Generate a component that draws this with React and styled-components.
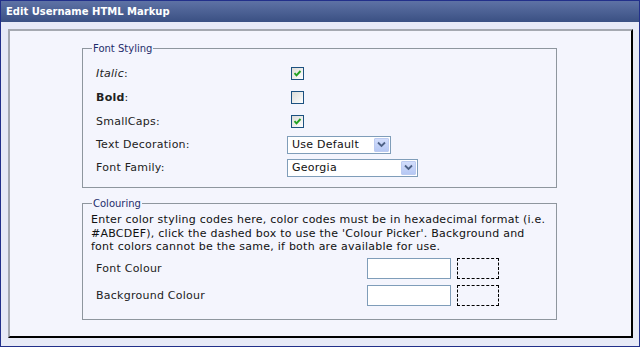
import React from 'react';
import styled, { createGlobalStyle } from 'styled-components';

const GlobalStyle = createGlobalStyle`
  body {
    margin: 0;
    font-family: "DejaVu Sans", Verdana, sans-serif;
  }
`;

const Window = styled.div`
  box-sizing: border-box;
  width: 640px;
  height: 347px;
  border: 1px solid #22308a;
  background: #e7eaf7;
  display: flex;
  flex-direction: column;
`;

const TitleBar = styled.div`
  height: 21px;
  line-height: 21px;
  padding-left: 5px;
  background: linear-gradient(#5e72a5, #3a5083);
  color: #fff;
  font-weight: bold;
  font-size: 10px;
`;

const Body = styled.div`
  flex: 1;
  padding: 7px 6px 8px 7px;
  display: flex;
`;

const Panel = styled.div`
  flex: 1;
  box-sizing: border-box;
  border-top: 2px solid #a5a9b1;
  border-left: 2px solid #a5a9b1;
  border-right: 2px solid #000;
  border-bottom: 2px solid #000;
  background: #f4f5fd;
  padding: 12px 0 0 72px;
  display: flex;
  flex-direction: column;
  gap: 10px;
`;

const Fieldset = styled.fieldset`
  box-sizing: border-box;
  width: 475px;
  margin: 0;
  border: 1px solid #8e969e;
  padding: ${p => p.$pad};
  font-size: 11px;
  letter-spacing: 0.25px;
  color: #222;
`;

const Legend = styled.legend`
  color: #1f2d6b;
  padding: 0 1px;
  margin-left: ${p => p.$offset}px;
  font-size: 10px;
  letter-spacing: 0;
`;

const Row = styled.div`
  display: grid;
  grid-template-columns: ${p => p.$cols};
  align-items: center;
  height: ${p => p.$h}px;
`;

const Label = styled.span`
  font-style: ${p => (p.$italic ? 'italic' : 'normal')};
`;

const Strong = styled.b`
  font-weight: bold;
`;

const CheckBox = styled.span`
  box-sizing: border-box;
  width: 13px;
  height: 13px;
  margin-left: 4px;
  border: 1px solid #1c5180;
  background: linear-gradient(135deg, #dcdcd7, #fff);
  display: flex;
  align-items: center;
  justify-content: center;
`;

const SelectBox = styled.div`
  box-sizing: border-box;
  width: ${p => p.$w}px;
  height: 18px;
  border: 1px solid #7f9db9;
  background: #fff;
  display: flex;
  align-items: center;
  justify-content: space-between;
  padding: 0 1px 0 4px;
  color: #111;
`;

const ArrowButton = styled.span`
  box-sizing: border-box;
  width: 15px;
  height: 14px;
  border: 1px solid #bccbf1;
  border-radius: 1px;
  background: linear-gradient(#d2ddfb, #b6c8f4);
  display: flex;
  align-items: center;
  justify-content: center;
`;

const Paragraph = styled.p`
  margin: 0 0 1px 0;
  line-height: 13.5px;
  color: #111;
`;

const ColourRow = styled.div`
  display: grid;
  grid-template-columns: 271px 90px 42px;
  align-items: center;
  height: 27px;
  padding-left: 5px;
`;

const TextInput = styled.span`
  box-sizing: border-box;
  width: 84px;
  height: 21px;
  border: 1px solid #7f9db9;
  background: #fff;
`;

const DashedBox = styled.span`
  box-sizing: border-box;
  width: 42px;
  height: 21px;
  border: 1px dashed #000;
`;

const Check = ({ checked }) => (
  <CheckBox>
    {checked && (
      <svg width="9" height="9" viewBox="0 0 9 9">
        <path d="M1.5 4.2 L3.5 6.3 L7.5 2" fill="none" stroke="#21a121" strokeWidth="1.9" />
      </svg>
    )}
  </CheckBox>
);

const Select = ({ width, value }) => (
  <SelectBox $w={width}>
    <span>{value}</span>
    <ArrowButton>
      <svg width="9" height="7" viewBox="0 0 9 7">
        <path d="M1 1.5 L4.5 5 L8 1.5" fill="none" stroke="#4d6185" strokeWidth="1.8" />
      </svg>
    </ArrowButton>
  </SelectBox>
);

const styleRows = [
  { label: <Label $italic>Italic</Label>, h: 24, control: <Check checked /> },
  { label: <Strong>Bold</Strong>, h: 24, control: <Check /> },
  { label: <Label>SmallCaps</Label>, h: 24, control: <Check checked /> },
  { label: <Label>Text Decoration</Label>, h: 23, control: <Select width={104} value="Use Default" /> },
  { label: <Label>Font Family</Label>, h: 23, control: <Select width={131} value="Georgia" /> },
];

export default function App() {
  return (
    <>
      <GlobalStyle />
      <Window>
        <TitleBar>Edit Username HTML Markup</TitleBar>
        <Body>
          <Panel>
            <Fieldset $pad="7px 0 8px 13px">
              <Legend $offset={-4}>Font Styling</Legend>
              {styleRows.map((r, i) => (
                <Row key={i} $cols="191px auto" $h={r.h}>
                  <span>{r.label}:</span>
                  <div>{r.control}</div>
                </Row>
              ))}
            </Fieldset>
            <Fieldset $pad="4px 8px 10px 8px">
              <Legend $offset={1}>Colouring</Legend>
              <Paragraph>
                Enter color styling codes here, color codes must be in hexadecimal format (i.e.
                <br />
                #ABCDEF), click the dashed box to use the 'Colour Picker'. Background and
                <br />
                font colors cannot be the same, if both are available for use.
              </Paragraph>
              <ColourRow>
                <span>Font Colour</span>
                <TextInput />
                <DashedBox />
              </ColourRow>
              <ColourRow>
                <span>Background Colour</span>
                <TextInput />
                <DashedBox />
              </ColourRow>
            </Fieldset>
          </Panel>
        </Body>
      </Window>
    </>
  );
}
